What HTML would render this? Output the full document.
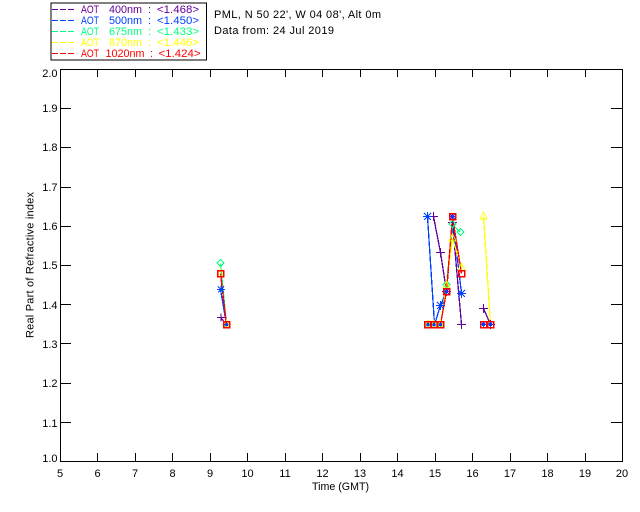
<!DOCTYPE html>
<html><head><meta charset="utf-8"><style>
html,body{margin:0;padding:0;background:#fff;width:640px;height:512px;overflow:hidden}
svg{display:block}
text{font-family:"Liberation Sans",sans-serif;font-size:11px;fill:#000}
.a{shape-rendering:crispEdges;stroke:#000;fill:none}
.l{shape-rendering:crispEdges;fill:none;stroke-width:1.3}
.m{shape-rendering:crispEdges;fill:none;stroke-width:1}
</style></head><body>
<svg width="640" height="512" viewBox="0 0 640 512" xmlns="http://www.w3.org/2000/svg">
<rect x="51" y="3" width="155.5" height="57" class="a" stroke-width="1"/>
<g class="m">
<path stroke="#660099" stroke-dasharray="6 2" d="M52 9.5H75"/>
<path stroke="#0040ff" stroke-dasharray="6 2" d="M52 20.5H75"/>
<path stroke="#00ff80" stroke-dasharray="6 2" d="M52 31.5H75"/>
<path stroke="#ffff00" stroke-dasharray="6 2" d="M52 42.5H75"/>
<path stroke="#ff0000" stroke-dasharray="6 2" d="M52 53.5H75"/>
</g>
<text x="81" y="13" textLength="18" lengthAdjust="spacingAndGlyphs" style="fill:#660099">AOT</text><text x="109" y="13" textLength="33" lengthAdjust="spacingAndGlyphs" style="fill:#660099">400nm</text><text x="148" y="13" style="fill:#660099">:</text><text x="157" y="13" textLength="42" lengthAdjust="spacingAndGlyphs" style="fill:#660099">&lt;1.468&gt;</text>
<text x="81" y="24" textLength="18" lengthAdjust="spacingAndGlyphs" style="fill:#0040ff">AOT</text><text x="109" y="24" textLength="33" lengthAdjust="spacingAndGlyphs" style="fill:#0040ff">500nm</text><text x="148" y="24" style="fill:#0040ff">:</text><text x="157" y="24" textLength="42" lengthAdjust="spacingAndGlyphs" style="fill:#0040ff">&lt;1.450&gt;</text>
<text x="81" y="35" textLength="18" lengthAdjust="spacingAndGlyphs" style="fill:#00ff80">AOT</text><text x="109" y="35" textLength="33" lengthAdjust="spacingAndGlyphs" style="fill:#00ff80">675nm</text><text x="148" y="35" style="fill:#00ff80">:</text><text x="157" y="35" textLength="42" lengthAdjust="spacingAndGlyphs" style="fill:#00ff80">&lt;1.433&gt;</text>
<text x="81" y="46" textLength="18" lengthAdjust="spacingAndGlyphs" style="fill:#ffff00">AOT</text><text x="109" y="46" textLength="33" lengthAdjust="spacingAndGlyphs" style="fill:#ffff00">870nm</text><text x="148" y="46" style="fill:#ffff00">:</text><text x="157" y="46" textLength="42" lengthAdjust="spacingAndGlyphs" style="fill:#ffff00">&lt;1.446&gt;</text>
<text x="81" y="57" textLength="18" lengthAdjust="spacingAndGlyphs" style="fill:#ff0000">AOT</text><text x="105.5" y="57" textLength="39" lengthAdjust="spacingAndGlyphs" style="fill:#ff0000">1020nm</text><text x="150" y="57" style="fill:#ff0000">:</text><text x="158.5" y="57" textLength="42" lengthAdjust="spacingAndGlyphs" style="fill:#ff0000">&lt;1.424&gt;</text>

<text x="214" y="18" textLength="167">PML, N 50 22', W 04 08', Alt 0m</text>
<text x="214" y="34" textLength="120">Data from: 24 Jul 2019</text>

<g class="a" stroke-width="1">
<path d="M60.5 69.5H622.5V461.5H60.5Z"/>
<path d="M60 108.5h11M60 147.5h11M60 187.5h11M60 226.5h11M60 265.5h11M60 304.5h11M60 343.5h11M60 383.5h11M60 422.5h11"/>
<path d="M611 108.5h11M611 147.5h11M611 187.5h11M611 226.5h11M611 265.5h11M611 304.5h11M611 343.5h11M611 383.5h11M611 422.5h11"/>
<path d="M97.5 69v8M135.5 69v8M172.5 69v8M210.5 69v8M247.5 69v8M285.5 69v8M322.5 69v8M360.5 69v8M397.5 69v8M435.5 69v8M472.5 69v8M510.5 69v8M547.5 69v8M585.5 69v8"/>
<path d="M97.5 453v8M135.5 453v8M172.5 453v8M210.5 453v8M247.5 453v8M285.5 453v8M322.5 453v8M360.5 453v8M397.5 453v8M435.5 453v8M472.5 453v8M510.5 453v8M547.5 453v8M585.5 453v8"/>
</g>

<g text-anchor="end">
<text x="57.5" y="77">2.0</text><text x="57.5" y="112">1.9</text><text x="57.5" y="151">1.8</text><text x="57.5" y="191">1.7</text><text x="57.5" y="230">1.6</text><text x="57.5" y="269">1.5</text><text x="57.5" y="309">1.4</text><text x="57.5" y="348">1.3</text><text x="57.5" y="387">1.2</text><text x="57.5" y="427">1.1</text><text x="57.5" y="462">1.0</text>
</g>
<g text-anchor="middle">
<text x="60" y="477">5</text><text x="97.5" y="477">6</text><text x="135" y="477">7</text><text x="172.5" y="477">8</text><text x="210" y="477">9</text><text x="247.5" y="477">10</text><text x="285" y="477">11</text><text x="322.5" y="477">12</text><text x="360" y="477">13</text><text x="397.5" y="477">14</text><text x="435" y="477">15</text><text x="472.5" y="477">16</text><text x="510" y="477">17</text><text x="547.5" y="477">18</text><text x="585" y="477">19</text><text x="622" y="477">20</text>
</g>
<text x="312" y="490" textLength="57" lengthAdjust="spacingAndGlyphs">Time (GMT)</text>
<text transform="translate(33.5 338) rotate(-90)" textLength="146">Real Part of Refractive index</text>

<g class="l">
<path stroke="#660099" d="M220.5 317.5L226.5 324.5"/>
<path stroke="#0040ff" d="M220.5 289.5L226.5 324.5"/>
<path stroke="#00ff80" d="M220.5 263.5L226.5 324.5"/>
<path stroke="#ffff00" d="M220.5 273.5L226.5 324.5"/>
<path stroke="#ff0000" d="M220.5 273.5L226.5 324.5"/>

<path stroke="#660099" d="M433.5 216.5L440.5 252.5L446.5 291.5L452.5 222.5L461.5 324.5"/>
<path stroke="#0040ff" d="M427.5 216.5L434.5 324.5L440.5 305.5L446.5 291.5L452.5 216.5L461.5 293.5"/>
<path stroke="#00ff80" d="M428 324.5H440.5L446.5 284.5L452.5 224.5L460.5 232.5"/>
<path stroke="#ffff00" d="M428 324.5H440.5L446.5 284.5L452.5 238.5L461.5 267.5"/>
<path stroke="#ff0000" d="M428 324.5H440.5L446.5 291.5L452.5 216.5L461.5 273.5"/>

<path stroke="#660099" d="M483.5 308.5L490.5 324.5"/>
<path stroke="#ffff00" d="M483.5 216.5L490.5 324.5"/>
<path stroke="#ff0000" d="M484 324.5H490.5"/>
</g>

<g class="m" stroke="#660099">
<path d="M217 317.5h8M221 313.5v8M222.5 324.5h8M226.5 320.5v8"/>
<path d="M429 216.5h9M433.5 212v9M436 252.5h9M440.5 248v9M442 291.5h9M446.5 287v9M448 222.5h9M452.5 218v9M457 324.5h9M461.5 320v9"/>
<path d="M479 308.5h9M483.5 304v9M486 324.5h9M490.5 320v9"/>
</g>
<g class="m" stroke="#0040ff">
<path d="M217 289.5h8M221 285.5v8M218 286.5l6 6M224 286.5l-6 6"/>
<path d="M223 324.5h7M226.5 321v7M224 322l5 5M229 322l-5 5"/>
<path d="M423 216.5h9M427.5 212v9M424 213l7 7M431 213l-7 7"/>
<path d="M430.5 324.5h7M434 321v7M431.5 322l5 5M436.5 322l-5 5"/>
<path d="M424.5 324.5h7M428 321v7M425.5 322l5 5M430.5 322l-5 5"/>
<path d="M437 324.5h7M440.5 321v7M438 322l5 5M443 322l-5 5"/>
<path d="M436 305.5h9M440.5 301v9M437 302l7 7M444 302l-7 7"/>
<path d="M443 291.5h7M446.5 288v7M444 289l5 5M449 289l-5 5"/>
<path d="M449 216.5h7M452.5 213v7M450 214l5 5M455 214l-5 5"/>
<path d="M457 293.5h9M461.5 289v9M458 290l7 7M465 290l-7 7"/>
</g>
<g class="m" stroke="#00ff80">
<path d="M220.5 259.5l3.5 3.5l-3.5 3.5l-3.5-3.5z"/>
<path d="M226.5 321l3.5 3.5l-3.5 3.5l-3.5-3.5z"/>
<path d="M452.5 220.5l3.5 3.5l-3.5 3.5l-3.5-3.5z"/>
<path d="M460.5 228.5l3.5 3.5l-3.5 3.5l-3.5-3.5z"/>
<path d="M446.5 281l3.5 3.5l-3.5 3.5l-3.5-3.5z"/>
<path d="M428 321l3.5 3.5l-3.5 3.5l-3.5-3.5zM434 321l3.5 3.5l-3.5 3.5l-3.5-3.5zM440.5 321l3.5 3.5l-3.5 3.5l-3.5-3.5z"/>
</g>
<g class="m" stroke="#ffff00">
<path d="M220.5 269l3.5 7h-7z"/>
<path d="M226.5 320l3.5 7h-7z"/>
<path d="M452.5 234l3.5 7h-7z"/>
<path d="M461.5 263l3.5 7h-7z"/>
<path d="M446.5 281l3.5 7h-7z"/>
<path d="M483.5 212l3.5 7h-7z"/>
<path d="M428 320l3.5 7h-7zM434 320l3.5 7h-7zM440.5 320l3.5 7h-7z"/>
</g>
<g class="m" stroke="#ff0000" style="stroke-width:1.5">
<rect x="217.5" y="270.5" width="6" height="6"/>
<rect x="223.5" y="321.5" width="6" height="6"/>
<rect x="424.5" y="321.5" width="6" height="6"/>
<rect x="431" y="321.5" width="6" height="6"/>
<rect x="437.5" y="321.5" width="6" height="6"/>
<rect x="443.5" y="288.5" width="6" height="6"/>
<rect x="449.5" y="213.5" width="6" height="6"/>
<rect x="458.5" y="270.5" width="6" height="6"/>
<rect x="480.5" y="321.5" width="6" height="6"/>
<rect x="487.5" y="321.5" width="6" height="6"/>
</g>
<g class="m" stroke="#0040ff">
<path d="M450.5 216.5h4M452.5 214.5v4M224.5 324.5h4M226.5 322.5v4"/>
<path d="M481 324.5h5M483.5 322v5M482 323l3 3M485 323l-3 3M488 324.5h5M490.5 322v5M489 323l3 3M492 323l-3 3"/>
</g>
</svg>
</body></html>
